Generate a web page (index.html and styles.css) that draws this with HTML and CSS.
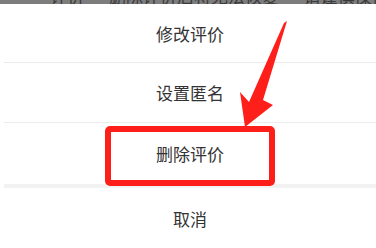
FILE: index.html
```html
<!DOCTYPE html>
<html lang="zh">
<head>
<meta charset="utf-8">
<link rel="stylesheet" href="styles.css">
</head>
<body>
<div class="page">
  <div class="topbar"><span class="toptext">评价 · 删除评价后将无法恢复 · 请谨慎操作哦</span></div>
  <div class="sheet">
    <div class="row r1">修改评价</div>
    <div class="row r2">设置匿名</div>
    <div class="row r3">删除评价</div>
    <div class="row cancel">取消</div>
  </div>
  <div class="highlight"></div>
  <svg class="arrow" width="376" height="248" viewBox="0 0 376 248">
    <polygon points="287,21 284,23 249,102 240,92 245,127 273,105 263,100" fill="#ff1f1a"/>
  </svg>
</div>
</body>
</html>
```
FILE: styles.css
```css
html, body {
  margin: 0;
  padding: 0;
  background: #ffffff;
}
.page {
  position: relative;
  width: 376px;
  height: 248px;
  overflow: hidden;
  font-family: "Noto Sans CJK SC", "Noto Sans", sans-serif;
}
.topbar {
  height: 4px;
  background: #7d7d7d;
  overflow: hidden;
  display: flex;
  justify-content: center;
  align-items: flex-end;
}
.toptext {
  font-size: 17px;
  line-height: 17px;
  color: #3a3a3a;
  margin-bottom: 0;
  white-space: nowrap;
  padding-left: 80px;
}
.sheet {
  margin-left: 4px;
  display: flex;
  flex-direction: column;
}
.row {
  display: flex;
  align-items: center;
  justify-content: center;
  font-size: 17px;
  color: #333333;
  letter-spacing: 0;
}
.r1 {
  height: 58px;
  border-bottom: 1px solid #ececec;
}
.r2 {
  height: 59px;
  border-bottom: 1px solid #ececec;
}
.r3 {
  height: 61px;
  border-bottom: 4px solid #f2f2f2;
}
.cancel {
  height: 60px;
  padding-bottom: 0;
}
.highlight {
  position: absolute;
  left: 105px;
  top: 126px;
  width: 158px;
  height: 48px;
  border: 6px solid #ff1f1a;
  border-radius: 5px;
}
.arrow {
  position: absolute;
  left: 0;
  top: 0;
}
```
